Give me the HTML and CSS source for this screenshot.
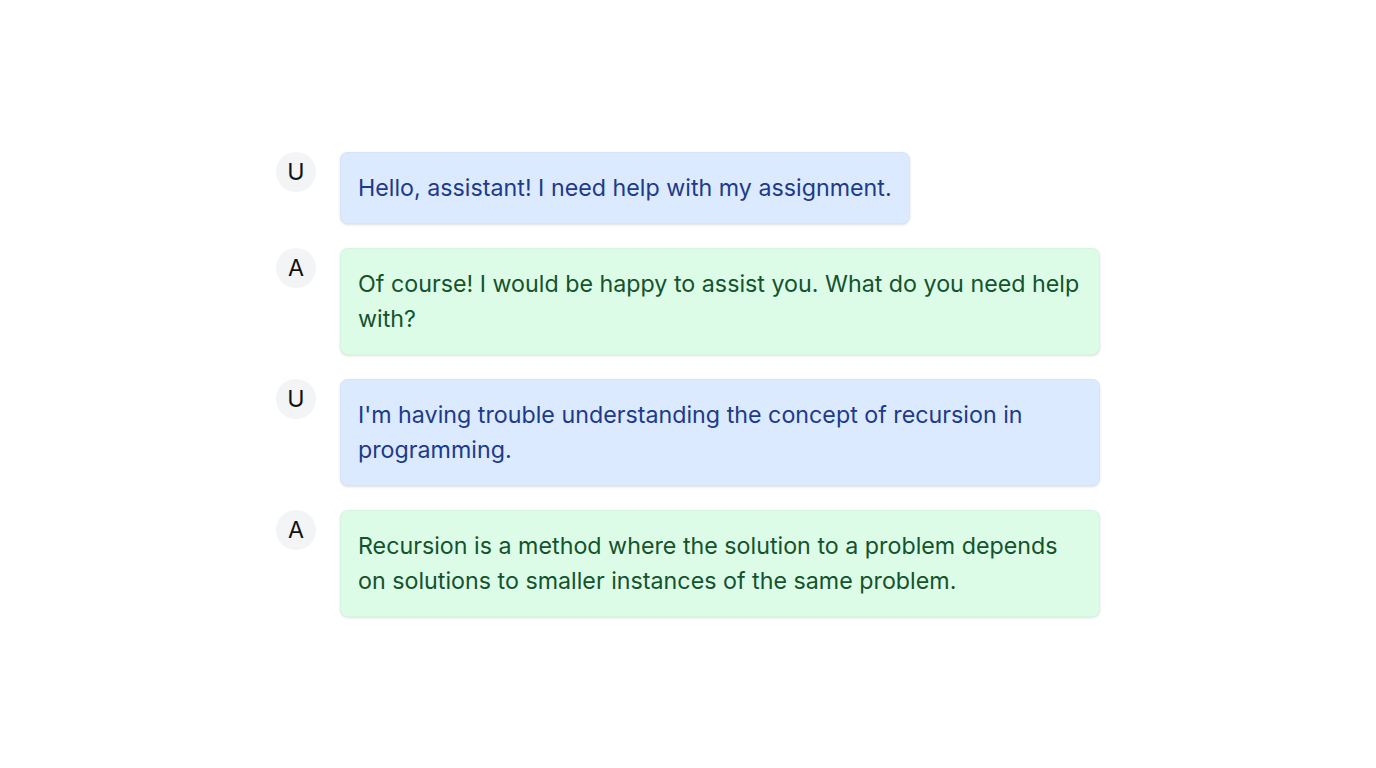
FILE: index.html
```html
<!DOCTYPE html>
<html lang="en">
<head>
<meta charset="utf-8">
<title>Chat</title>
<link rel="stylesheet" href="styles.css">
</head>
<body>
<main class="page">
  <div class="chat">
    <div class="row">
      <div class="avatar">U</div>
      <div class="bubble user">Hello, assistant! I need help with my assignment.</div>
    </div>
    <div class="row">
      <div class="avatar">A</div>
      <div class="bubble bot">Of course! I would be happy to assist you. What do you need help with?</div>
    </div>
    <div class="row">
      <div class="avatar">U</div>
      <div class="bubble user">I'm having trouble understanding the concept of recursion in programming.</div>
    </div>
    <div class="row">
      <div class="avatar">A</div>
      <div class="bubble bot">Recursion is a method where the solution to a problem depends on solutions to smaller instances of the same problem.</div>
    </div>
  </div>
</main>
</body>
</html>
```
FILE: styles.css
```css
* { box-sizing: border-box; }
html, body { margin: 0; padding: 0; background: #ffffff; }
body { font-family: Inter, "Noto Sans", sans-serif; }
.page {
  min-height: 100vh;
  display: flex;
  align-items: center;
  justify-content: center;
}
.chat {
  width: 824px;
  display: flex;
  flex-direction: column;
  gap: 24px;
}
.row {
  display: flex;
  align-items: flex-start;
  gap: 24px;
}
.avatar {
  flex: 0 0 40px;
  width: 40px;
  height: 40px;
  border-radius: 50%;
  background: #f3f4f6;
  color: #111111;
  font-size: 23.25px;
  display: flex;
  align-items: center;
  justify-content: center;
}
.bubble {
  max-width: 760px;
  padding: 17.5px 17px;
  border-radius: 8px;
  font-size: 23.25px;
  line-height: 35px;
  border: 1px solid rgba(0,0,0,0.025);
  box-shadow: 0 1px 3px 0 rgba(0,0,0,0.1), 0 1px 2px -1px rgba(0,0,0,0.1);
}
.user { background: #dbeafe; color: #1e3a8a; }
.bot { background: #dcfce7; color: #14532d; }
```
